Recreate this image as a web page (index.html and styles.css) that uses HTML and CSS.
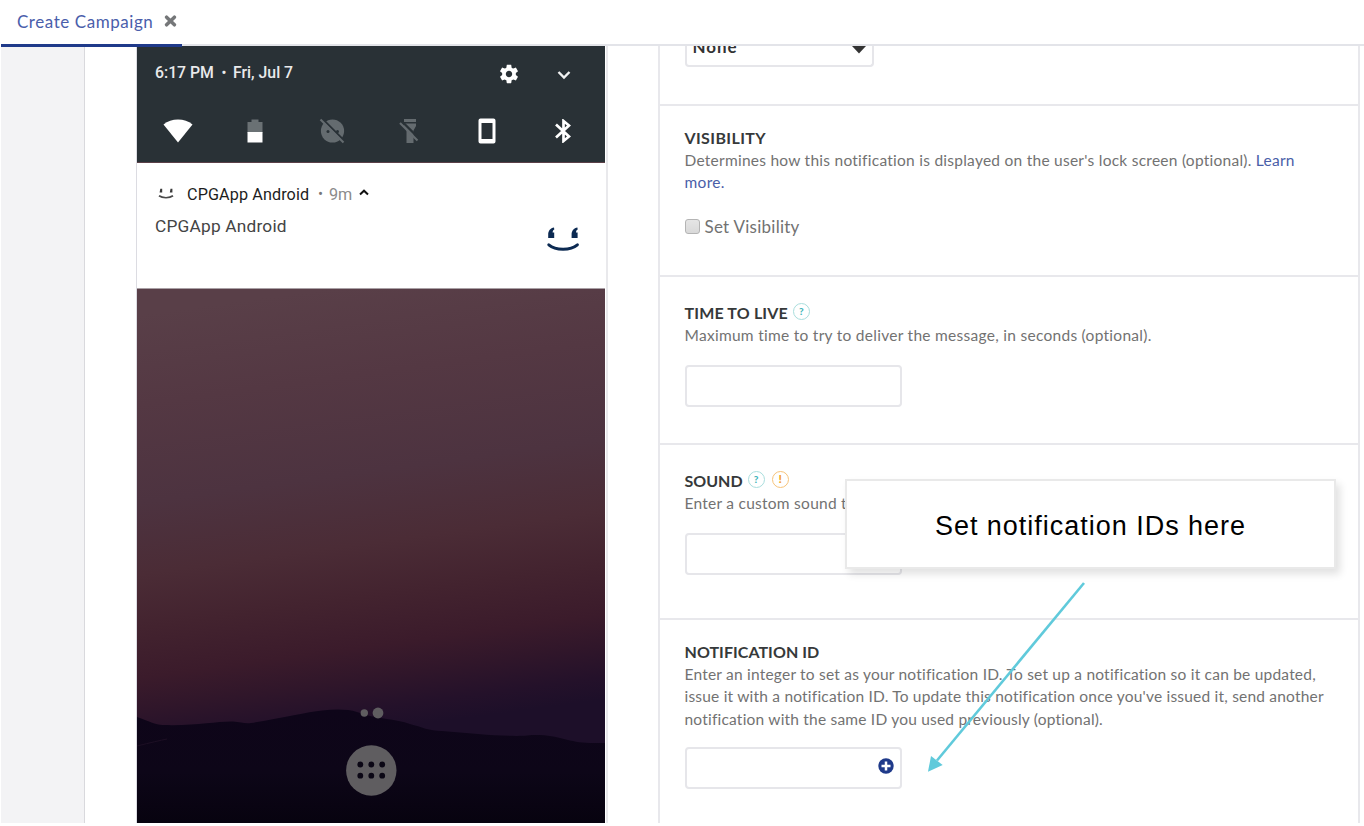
FILE: index.html
```html
<!DOCTYPE html>
<html lang="en">
<head>
<meta charset="utf-8">
<title>Create Campaign</title>
<link rel="stylesheet" href="styles.css">
</head>
<body>
<div class="app">
  <header class="tabs">
    <div class="tab">
      <span class="tab-label">Create Campaign</span>
      <svg class="tab-close" width="13" height="12" viewBox="0 0 13 12"><path d="M2.6 2.2l7.8 7.6M10.400 2.200l-7.800 7.600" stroke="#757779" stroke-width="3.500" stroke-linecap="round"/></svg>
    </div>
  </header>
  <main class="workspace">
    <aside class="rail"></aside>
    <div class="preview">
      <div class="phone">
        <div class="shade">
          <div class="shade-top">
            <span class="clock">6:17 PM</span><span class="clock-dot">•</span><span class="date">Fri, Jul 7</span>
            <svg class="gear" width="24" height="24" viewBox="0 0 24 24"><path fill="#fff" d="M19.430 12.980c.04-.32.07-.64.07-.98s-.03-.66-.07-.98l2.110-1.650c.19-.15.24-.42.12-.64l-2-3.460c-.12-.22-.39-.3-.61-.22l-2.490 1c-.52-.4-1.080-.73-1.690-.98l-.38-2.650C14.460 2.180 14.250 2 14 2h-4c-.25 0-.46.18-.49.42l-.38 2.650c-.61.25-1.170.59-1.690.98l-2.490-1c-.23-.09-.49 0-.61.22l-2 3.460c-.13.22-.07.49.12.64l2.110 1.650c-.04.32-.07.65-.07.98s.03.66.07.98l-2.110 1.650c-.19.15-.24.42-.12.64l2 3.460c.12.22.39.3.61.22l2.490-1c.52.4 1.080.73 1.690.98l.38 2.650c.03.24.24.42.49.42h4c.25 0 .46-.18.49-.42l.38-2.650c.61-.25 1.170-.59 1.690-.98l2.490 1c.23.09.49 0 .61-.22l2-3.460c.12-.22.07-.49-.12-.64l-2.110-1.650zM12 15.500c-1.930 0-3.500-1.570-3.500-3.500s1.570-3.500 3.500-3.500 3.500 1.570 3.500 3.500-1.570 3.500-3.500 3.500z"/></svg>
            <svg class="chevron" width="14" height="10" viewBox="0 0 14 10"><path d="M1.500 2L7 7.500 12.500 2" fill="none" stroke="#f1f2f2" stroke-width="2.400"/></svg>
          </div>
          <div class="quick">
            <svg width="30" height="24" viewBox="0 0 30 24"><path fill="#fff" d="M.5 5.500C4.500 2.200 9.500.6 15 .6s10.500 1.600 14.500 4.900L15 23.500z"/></svg>
            <svg width="16" height="24" viewBox="0 0 16 24"><path fill="#6a7174" d="M4.500.5h7V3H15.500v11H.5V3h4z"/><path fill="#fff" d="M.5 13h15v10.500H.5z"/></svg>
            <svg width="26" height="26" viewBox="0 0 26 26"><circle cx="13.500" cy="13" r="11.600" fill="#646b6f"/><circle cx="9" cy="13.500" r="1.500" fill="#293136"/><circle cx="18.500" cy="13.500" r="1.500" fill="#293136"/><path d="M3.500 1L26 23.500" stroke="#293136" stroke-width="2.200"/><path d="M1.500 1.500L24.500 24.500" stroke="#646b6f" stroke-width="2.200"/></svg>
            <svg width="20" height="26" viewBox="0 0 20 26"><path fill="#646b6f" d="M5 1h12v3H5zM5 5.500h12v2.500L14.500 12.500V25H7.500V12.500L5 8z"/><path d="M3 3.500L20 20.500" stroke="#293136" stroke-width="2.400"/><path d="M1 5L18.500 22.500" stroke="#646b6f" stroke-width="2.200"/></svg>
            <svg class="device" width="18" height="26" viewBox="0 0 18 26"><path fill="#fff" fill-rule="evenodd" d="M2.500.5h13a2 2 0 0 1 2 2v21a2 2 0 0 1-2 2h-13a2 2 0 0 1-2-2v-21a2 2 0 0 1 2-2zM3.500 5v16h11V5z"/></svg>
            <svg width="16" height="24" viewBox="0 0 16 24"><path d="M1 5.500L14 17.500 8.500 22V2L14 6.500 1 18.500" fill="none" stroke="#fff" stroke-width="2.700"/></svg>
          </div>
        </div>
        <div class="note">
          <div class="note-head">
            <svg class="note-icon" width="16" height="12" viewBox="0 0 16 12"><path fill="#3a3a3a" d="M2.300.8h1.900v3.700H1.600zM12.500.8h1.900v3.700h-2.600z"/><path d="M1 7.800C4.500 10.400 11.500 10.400 15 7.800" fill="none" stroke="#4a4a4a" stroke-width="1.700"/></svg>
            <span class="note-app">CPGApp Android</span><span class="note-dot">•</span><span class="note-age">9m</span>
            <svg class="note-caret" width="10" height="7" viewBox="0 0 10 7"><path d="M1 5.500L5 1.700 9 5.500" fill="none" stroke="#111" stroke-width="2"/></svg>
          </div>
          <div class="note-body">
            <span>CPGApp Android</span>
            <svg class="smile" width="34" height="25" viewBox="0 0 34 25"><path fill="#0c2a52" d="M8 .6C4.500 1.100 2.200 4 2.200 7.500V11h6V5.400H6.600C6.700 3.800 7.200 2.800 8.300 2.400zM31.400.6c-3.500.5-5.800 3.400-5.800 6.900V11h6V5.400H30c.1-1.600.6-2.600 1.700-3z"/><path d="M2.800 17.800C9.500 23.600 24.500 23.600 31.400 17.800" fill="none" stroke="#0c2a52" stroke-width="3" stroke-linecap="round"/></svg>
          </div>
        </div>
        <svg class="wallpaper" width="468" height="534" viewBox="0 0 468 534">
          <defs>
            <linearGradient id="sky" gradientUnits="userSpaceOnUse" x1="190" y1="0" x2="250" y2="440">
              <stop offset="0" stop-color="#593f48"/><stop offset=".2" stop-color="#543843"/><stop offset=".42" stop-color="#4d3340"/><stop offset=".58" stop-color="#4b2c36"/><stop offset=".7" stop-color="#43232f"/><stop offset=".81" stop-color="#3b1b2b"/><stop offset=".88" stop-color="#30162a"/><stop offset=".95" stop-color="#24112a"/><stop offset="1" stop-color="#1d0f29"/>
            </linearGradient>
            <linearGradient id="hill" x1="0" y1="0" x2="0" y2="1"><stop offset="0" stop-color="#0e0519"/><stop offset=".55" stop-color="#0d0618"/><stop offset="1" stop-color="#07030f"/></linearGradient>
          </defs>
          <rect width="468" height="534" fill="url(#sky)"/>
          <path fill="url(#hill)" d="M0 428C12 432 18 436 26 436C60 437 80 432 96 432.500C104 433 108 435 114 434C145 429 170 423 185 421.500C198 420 211 420 220 423C238 430 260 430 273 435C285 438 292 442 305 442C338 445 375 448 390 446.500C420 444 430 454 453 454L468 454V534H0z"/>
          <path d="M0 457Q20 452 30 450" fill="none" stroke="#1d0f24"/>
          <g fill="#5f5d60"><circle cx="227.300" cy="424" r="3.700"/><circle cx="241" cy="424" r="5.400"/><circle cx="234.300" cy="481.500" r="25.200"/></g>
          <g fill="#0b0715"><circle cx="223.300" cy="475.500" r="2.900"/><circle cx="234.300" cy="475.500" r="2.900"/><circle cx="245.200" cy="475.500" r="2.900"/><circle cx="223.300" cy="486.700" r="2.900"/><circle cx="234.300" cy="486.700" r="2.900"/><circle cx="245.200" cy="486.700" r="2.900"/></g>
        </svg>
      </div>
    </div>
    <form class="settings">
      <section class="group group-select">
        <div class="select"><span>None</span><svg width="14" height="8" viewBox="0 0 14 8"><path d="M0 0h14L7 7.500z" fill="#333"/></svg></div>
      </section>
      <section class="group group-visibility">
        <h2 class="title"><span class="t-vis">VISIBILITY</span></h2>
        <p class="desc"><span class="d1">Determines how this notification is displayed on the user's lock screen (optional). <a>Learn</a></span><br><span class="d2"><a>more.</a></span></p>
        <label class="check"><i class="box"></i><span>Set Visibility</span></label>
      </section>
      <section class="group group-ttl">
        <h2 class="title"><span class="t-ttl">TIME TO LIVE</span><i class="hint">?</i></h2>
        <p class="desc"><span class="d3">Maximum time to try to deliver the message, in seconds (optional).</span></p>
        <div class="field"></div>
      </section>
      <section class="group group-sound">
        <h2 class="title"><span class="t-snd">SOUND</span><i class="hint">?</i><i class="hint warn">!</i></h2>
        <p class="desc"><span class="d4">Enter a custom sound t</span></p>
        <div class="field"></div>
      </section>
      <section class="group group-id">
        <h2 class="title"><span class="t-id">NOTIFICATION ID</span></h2>
        <p class="desc"><span class="d5">Enter an integer to set as your notification ID. To set up a notification so it can be updated,</span><br><span class="d6">issue it with a notification ID. To update this notification once you've issued it, send another</span><br><span class="d7">notification with the same ID you used previously (optional).</span></p>
        <div class="field"><svg width="16" height="16" viewBox="0 0 16 16"><circle cx="8" cy="8" r="7.700" fill="#1f3a8a"/><path d="M8 3.500v9M3.500 8h9" stroke="#fff" stroke-width="2.500"/></svg></div>
      </section>
    </form>
  </main>
  <div class="callout">Set notification IDs here</div>
  <svg class="arrow" width="164" height="196" viewBox="0 0 164 196"><path d="M164 3L17 180.500" stroke="#60cadb" stroke-width="2.600"/><path d="M8 191.700L11 176 22.700 185z" fill="#60cadb"/></svg>
</div>
</body>
</html>
```
FILE: styles.css
```css
* { box-sizing: border-box; }
body { margin: 0; background: #fff; font-family: Lato, "Open Sans", sans-serif; color: #727272; font-variant-ligatures: none; }
svg { display: block; flex: none; }
a { color: #4a5ea8; }
.app { position: relative; width: 1364px; height: 823px; padding-left: 1px; overflow: hidden; }
.tabs { height: 46px; border-bottom: 2px solid #e3e4e9; display: flex; }
.tab { width: 181px; height: 47px; border-bottom: 3px solid #1f3a8a; display: flex; align-items: center; padding: 0 0 2px 16px; gap: 10px; flex: none; z-index: 1; }
.tab-label { font-size: 17px; color: #4a5eab; letter-spacing: .56px; white-space: nowrap; width: 137px; }
.workspace { height: 777px; display: flex; }
.rail { width: 84px; background: #f3f3f5; border-right: 1px solid #d9d9dd; }
.preview { width: 573px; padding-left: 51px; }
.phone { width: 472px; height: 777px; border-left: 1px solid #dcdce2; border-right: 2px solid #e9e9ec; }
.shade { width: 468px; height: 117px; background: #293136; border-bottom: 1px solid #5b4048; font-family: Roboto, sans-serif; color: #e9eaeb; }
.shade-top { height: 53px; padding-left: 18px; display: flex; align-items: center; font-size: 15.800px; font-weight: 500; white-space: nowrap; }
.clock { width: 60px; }
.clock-dot { font-size: 14px; width: 18px; text-align: center; }
.date { width: 265px; }
.gear { width: 22px; height: 22px; margin-top: 3px; }
.chevron { margin: 5px 0 0 36.500px; }
.quick { height: 63px; display: grid; grid-template-columns: repeat(6, 77.100px); justify-items: center; align-items: center; padding-left: 2px; }
.quick svg { height: 24px; }
.quick svg:nth-child(3), .quick svg:nth-child(4), .quick svg:nth-child(5) { height: 26px; }
.quick .device { margin-left: 2px; }
.note { width: 468px; height: 126px; padding: 20px 18px 0 18px; font-family: Roboto, sans-serif; border-bottom: 1px solid #a9a0a5; }
.note-head { height: 22px; display: flex; align-items: center; color: #1d1d1d; font-size: 16.200px; white-space: nowrap; }
.note-icon { margin: 0 13px 0 3px; }
.note-app { width: 124px; letter-spacing: .1px; }
.note-dot { width: 18px; text-align: center; font-size: 15px; color: #777; padding-left: 1px; }
.note-age { color: #8b8b8b; width: 30px; }
.note-caret { margin-top: -4px; }
.note-body { height: 44px; display: flex; justify-content: space-between; color: #444; font-size: 17.300px; letter-spacing: .2px; padding: 11px 7px 0 0; white-space: nowrap; }
.smile { margin-top: 11px; }
.wallpaper { width: 468px; height: 534px; }
.settings { width: 702px; height: 777px; border-left: 2px solid #e8e8ec; border-right: 2px solid #e8e8ec; display: grid; grid-template-rows: 60px 171px 168px 175px 1fr; }
.group { border-bottom: 2px solid #e8e8ec; padding-left: 24.500px; }
.group:last-child { border-bottom: 0; }
.group-visibility { padding-top: 21px; }
.group-ttl { padding-top: 25px; }
.group-sound { padding-top: 25px; }
.group-id { padding-top: 21px; }
.select { width: 189px; height: 21px; border: 2px solid #e6e6ea; border-top: 0; border-radius: 0 0 4px 4px; padding: 0 6px; display: flex; justify-content: space-between; overflow: hidden; color: #333; font-weight: 700; font-size: 17px; }
.select span { line-height: 18px; margin-top: -8px; letter-spacing: .9px; height: 18px; }
.title { margin: 0; height: 22px; display: flex; align-items: center; font-size: 16px; line-height: 22px; color: #36393a; font-weight: 700; white-space: nowrap; }
.t-vis { letter-spacing: .38px; }
.t-ttl { letter-spacing: .16px; }
.t-id { letter-spacing: .05px; }
.hint { width: 17px; height: 17px; border: 1.500px solid #a9dedd; border-radius: 50%; color: #43b5ba; font: 900 10px/14.500px Lato, sans-serif; text-align: center; margin: -3px 0 0 5px; }
.hint + .hint { margin-left: 7px; }
.warn { border-color: #f7c37a; color: #f3a22b; font-size: 12px; }
.desc { margin: 0; font-size: 15.500px; line-height: 22.300px; white-space: nowrap; }
.d1 { letter-spacing: .255px; }
.d2 { letter-spacing: .3px; }
.d3 { letter-spacing: .28px; }
.d4 { letter-spacing: .26px; }
.d5 { letter-spacing: .215px; }
.d6 { letter-spacing: .205px; }
.d7 { letter-spacing: .205px; }
.check { display: flex; align-items: center; height: 24px; margin-top: 21px; gap: 5px; font-size: 17px; letter-spacing: .26px; }
.box { width: 15px; height: 15px; border: 1.500px solid #b4b4b4; border-radius: 3px; background: linear-gradient(#e5e5e5, #d9d9d9); }
.field { width: 217.500px; height: 42px; margin-top: 18.500px; border: 2px solid #e6e6ea; border-radius: 4px; display: flex; align-items: center; justify-content: flex-end; padding: 0 6px 4px 0; }
.group-id .field { margin-top: 17px; }
.callout { position: absolute; left: 845px; top: 479px; width: 491px; height: 90px; border: 2px solid #e9e9e9; background: #fff; box-shadow: 4px 5px 8px rgba(0, 0, 0, .12); font: 27px/90px "Liberation Sans", Arial, sans-serif; letter-spacing: .98px; color: #000; text-align: center; padding: 0; }
.arrow { position: absolute; left: 920px; top: 580px; overflow: visible; }
```
